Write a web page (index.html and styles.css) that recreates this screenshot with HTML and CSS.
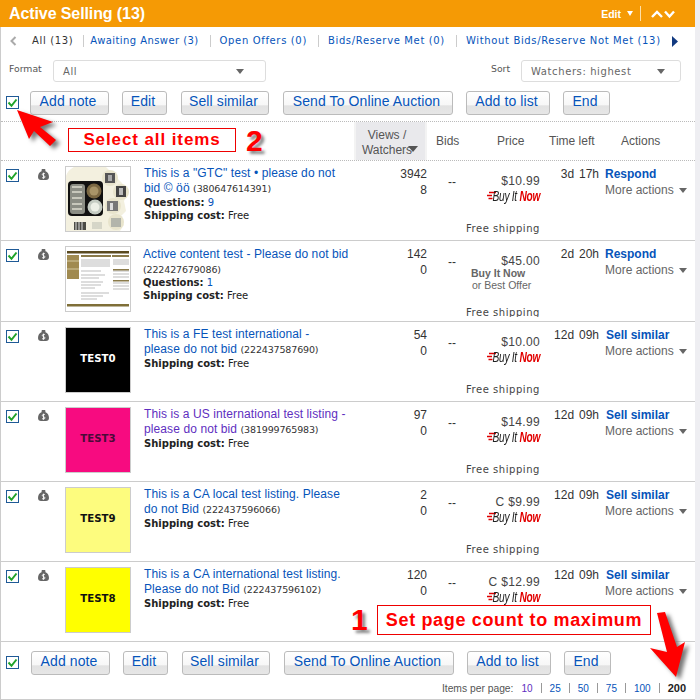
FILE: index.html
```html
<!DOCTYPE html>
<html lang="en">
<head>
<meta charset="utf-8">
<title>Active Selling</title>
<link rel="stylesheet" href="styles.css">
</head>
<body>
<svg class="defs" width="0" height="0" aria-hidden="true">
  <symbol id="bag" viewBox="0 0 11 11">
    <path d="M3.800 0h3.400l.3 2.200C9.600 2.800 11 5 11 8c0 2-1.200 3-3 3H3c-1.800 0-3-1-3-3 0-3 1.400-5.200 3.500-5.800z" fill="#666"/>
    <path d="M7 4.800C6.300 4.200 4.300 4.200 4.300 5.500S7 6.600 7 7.900 4.800 9.200 4 8.500M5.500 3.700v6" fill="none" stroke="#fff" stroke-width=".9"/>
  </symbol>
  <symbol id="stripes" viewBox="0 0 9 9">
    <path d="M2 1.500h7M0 4.500h5M1.500 7.500h4" stroke="#d00" stroke-width="1.300"/>
  </symbol>
  <symbol id="tick" viewBox="0 0 13 13">
    <path d="M2.500 6.500l3 3.300 5-6.300" fill="none" stroke="#1fa32a" stroke-width="2"/>
  </symbol>
</svg>

<main class="panel">
  <header class="title-bar">
    <h1 class="title">Active Selling (13)</h1>
    <div class="title-tools">
      <span class="edit-link">Edit</span>
      <span class="tri tri-white"></span>
      <span class="title-sep"></span>
      <svg class="chev" width="24" height="10" viewBox="0 0 24 10"><path d="M1 8l5-5 5 5M14 2.500l4.500 5 4.500-5" fill="none" stroke="#fff" stroke-width="2.400"/></svg>
    </div>
  </header>

  <nav class="tabs">
    <svg class="tab-prev" width="7" height="10" viewBox="0 0 7 10"><path d="M5.500 1L1.500 5l4 4" fill="none" stroke="#aaa" stroke-width="2"/></svg>
    <span class="tab tab-current">All (13)</span>
    <a class="tab tab-first">Awaiting Answer (3)</a>
    <a class="tab">Open Offers (0)</a>
    <a class="tab">Bids/Reserve Met (0)</a>
    <a class="tab">Without Bids/Reserve Not Met (13)</a>
    <svg class="tab-next" width="6" height="11" viewBox="0 0 6 11"><path d="M0 0l6 5.500L0 11z" fill="#123a80"/></svg>
  </nav>

  <section class="filters">
    <span class="filter-label">Format</span>
    <div class="select select-format"><span>All</span><span class="tri tri-gray"></span></div>
    <span class="filter-label sort-label">Sort</span>
    <div class="select select-sort"><span>Watchers: highest</span><span class="tri tri-gray"></span></div>
  </section>

  <section class="toolbar">
    <span class="check"><svg width="13" height="13"><use href="#tick"/></svg></span>
    <button class="btn btn-note">Add note</button>
    <button class="btn btn-edit">Edit</button>
    <button class="btn btn-sell">Sell similar</button>
    <button class="btn btn-send">Send To Online Auction</button>
    <button class="btn btn-list">Add to list</button>
    <button class="btn btn-end">End</button>
  </section>

  <section class="col-heads">
    <div class="head-views">Views /<br>Watchers<span class="tri tri-sort"></span></div>
    <div class="head head-bids">Bids</div>
    <div class="head head-price">Price</div>
    <div class="head head-time">Time left</div>
    <div class="head head-actions">Actions</div>
  </section>

  <article class="row">
    <span class="check check-row"><svg width="13" height="13"><use href="#tick"/></svg></span>
    <svg class="bag" width="11" height="11"><use href="#bag"/></svg>
    <div class="thumb">
      <svg width="64" height="64" viewBox="0 0 64 64">
        <rect width="64" height="64" fill="#f3f0df"/>
        <path d="M0 0h8C4 2 1 5 0 9zM40 0h24v64H54l4-6-4-8 6-6-2-10 4-8-6-10-8-8z" fill="#fff"/>
        <rect x="2" y="14" width="35" height="35" rx="4" fill="#111"/>
        <rect x="4" y="17" width="15" height="30" rx="3" fill="#8b8d84"/>
        <path d="M6 20h10M6 25h10M6 31h10M6 37h10M6 42h10" stroke="#c8c8bc" stroke-width="2"/>
        <circle cx="28" cy="24" r="7.500" fill="#7b6843"/><circle cx="28" cy="24" r="4.500" fill="#a89468"/>
        <circle cx="29" cy="40" r="7.500" fill="#c4cbc2"/><circle cx="29" cy="40" r="4.500" fill="#ecefe6"/>
        <circle cx="44" cy="11" r="8" fill="#e8e4cc"/><rect x="39" y="6" width="10" height="10" fill="#555"/><rect x="42" y="8" width="4" height="6" fill="#aaa"/>
        <circle cx="55" cy="25" r="8" fill="#e8e4cc"/><rect x="50" y="19" width="10" height="11" fill="#444"/><rect x="53" y="21" width="4" height="7" fill="#bbb"/>
        <circle cx="47" cy="39" r="8" fill="#e8e4cc"/><rect x="41" y="34" width="11" height="10" fill="#777"/><rect x="44" y="36" width="3" height="7" fill="#ddd"/>
        <circle cx="50" cy="55" r="8" fill="#e8e4cc"/><rect x="45" y="51" width="10" height="9" fill="#b3b5ab"/>
        <rect x="8" y="55" width="12" height="8" fill="#4a4a44"/><path d="M10 55v8M13 55v8M16 55v8" stroke="#ddd"/>
        <rect x="26" y="55" width="10" height="7" fill="#d6d6c8"/>
      </svg>
    </div>
    <div class="info">
      <p class="name"><a>This is a "GTC" test • please do not bid © öö</a> <span class="item-no">(380647614391)</span></p>
      <p class="meta"><b>Questions:</b> <a>9</a></p>
      <p class="meta"><b>Shipping cost:</b> Free</p>
    </div>
    <div class="counts">3942<br>8</div>
    <div class="bids">--</div>
    <div class="price"><span>$10.99</span>
      <span class="bin"><svg width="9" height="9"><use href="#stripes"/></svg><span class="bin-word">Buy It <em>Now</em></span></span>
      <span class="ship">Free shipping</span></div>
    <div class="time">3d 17h</div>
    <div class="acts"><a class="act act-tight">Respond</a><span class="more">More actions<span class="tri tri-more"></span></span></div>
  </article>

  <article class="row row-tall">
    <span class="check check-row"><svg width="13" height="13"><use href="#tick"/></svg></span>
    <svg class="bag" width="11" height="11"><use href="#bag"/></svg>
    <div class="thumb">
      <svg width="64" height="64" viewBox="0 0 64 64">
        <rect width="64" height="64" fill="#fff"/>
        <rect x="1" y="4" width="62" height="2.500" fill="#5a4a20"/>
        <rect x="1" y="8" width="12" height="24" fill="#a08a50"/>
        <path d="M1 14h12M1 22h12" stroke="#d3c8a0"/>
        <rect x="15" y="8" width="30" height="2" fill="#8a7a4a"/>
        <rect x="46" y="8" width="17" height="2" fill="#8a7a4a"/>
        <path d="M15 13h29M15 15h29M15 17h29M15 19h29M15 24h20M15 28h24M15 31h18M15 35h22M15 38h20M15 41h14M15 46h28M15 49h22M15 52h16M47 13h16M47 15h16M47 17h16M47 24h16M47 27h16M47 30h16M47 36h16M47 39h16M47 42h16" stroke="#bbb" stroke-width="1"/>
        <rect x="47" y="22" width="16" height="1.500" fill="#8a7a4a"/>
        <rect x="47" y="33" width="16" height="1.500" fill="#8a7a4a"/>
        <rect x="1" y="57" width="62" height="2.500" fill="#7f6f38"/>
      </svg>
    </div>
    <div class="info info-shift">
      <p class="name"><a>Active content test - Please do not bid</a> <span class="item-no">(222427679086)</span></p>
      <p class="meta"><b>Questions:</b> <a>1</a></p>
      <p class="meta"><b>Shipping cost:</b> Free</p>
    </div>
    <div class="counts">142<br>0</div>
    <div class="bids">--</div>
    <div class="price"><span>$45.00</span>
      <span class="offer"><b>Buy It Now</b><span class="offer-or">or Best Offer</span></span>
      <span class="ship ship-clip">Free shipping</span></div>
    <div class="time">2d 20h</div>
    <div class="acts"><a class="act act-tight">Respond</a><span class="more">More actions<span class="tri tri-more"></span></span></div>
  </article>

  <article class="row">
    <span class="check check-row"><svg width="13" height="13"><use href="#tick"/></svg></span>
    <svg class="bag" width="11" height="11"><use href="#bag"/></svg>
    <div class="thumb thumb-black">TEST0</div>
    <div class="info">
      <p class="name"><a>This is a FE test international - please do not bid</a> <span class="item-no">(222437587690)</span></p>
      <p class="meta"><b>Shipping cost:</b> Free</p>
    </div>
    <div class="counts">54<br>0</div>
    <div class="bids">--</div>
    <div class="price"><span>$10.00</span>
      <span class="bin"><svg width="9" height="9"><use href="#stripes"/></svg><span class="bin-word">Buy It <em>Now</em></span></span>
      <span class="ship">Free shipping</span></div>
    <div class="time">12d 09h</div>
    <div class="acts"><a class="act">Sell similar</a><span class="more">More actions<span class="tri tri-more"></span></span></div>
  </article>

  <article class="row">
    <span class="check check-row"><svg width="13" height="13"><use href="#tick"/></svg></span>
    <svg class="bag" width="11" height="11"><use href="#bag"/></svg>
    <div class="thumb thumb-pink">TEST3</div>
    <div class="info">
      <p class="name"><a class="visited">This is a US international test listing - please do not bid</a> <span class="item-no">(381999765983)</span></p>
      <p class="meta"><b>Shipping cost:</b> Free</p>
    </div>
    <div class="counts">97<br>0</div>
    <div class="bids">--</div>
    <div class="price"><span>$14.99</span>
      <span class="bin"><svg width="9" height="9"><use href="#stripes"/></svg><span class="bin-word">Buy It <em>Now</em></span></span>
      <span class="ship">Free shipping</span></div>
    <div class="time">12d 09h</div>
    <div class="acts"><a class="act">Sell similar</a><span class="more">More actions<span class="tri tri-more"></span></span></div>
  </article>

  <article class="row">
    <span class="check check-row"><svg width="13" height="13"><use href="#tick"/></svg></span>
    <svg class="bag" width="11" height="11"><use href="#bag"/></svg>
    <div class="thumb thumb-pale">TEST9</div>
    <div class="info">
      <p class="name"><a>This is a CA local test listing. Please do not Bid</a> <span class="item-no">(222437596066)</span></p>
      <p class="meta"><b>Shipping cost:</b> Free</p>
    </div>
    <div class="counts">2<br>0</div>
    <div class="bids">--</div>
    <div class="price"><span>C $9.99</span>
      <span class="bin"><svg width="9" height="9"><use href="#stripes"/></svg><span class="bin-word">Buy It <em>Now</em></span></span>
      <span class="ship">Free shipping</span></div>
    <div class="time">12d 09h</div>
    <div class="acts"><a class="act">Sell similar</a><span class="more">More actions<span class="tri tri-more"></span></span></div>
  </article>

  <article class="row">
    <span class="check check-row"><svg width="13" height="13"><use href="#tick"/></svg></span>
    <svg class="bag" width="11" height="11"><use href="#bag"/></svg>
    <div class="thumb thumb-yellow">TEST8</div>
    <div class="info">
      <p class="name"><a>This is a CA international test listing. Please do not Bid</a> <span class="item-no">(222437596102)</span></p>
      <p class="meta"><b>Shipping cost:</b> Free</p>
    </div>
    <div class="counts">120<br>0</div>
    <div class="bids">--</div>
    <div class="price"><span>C $12.99</span>
      <span class="bin"><svg width="9" height="9"><use href="#stripes"/></svg><span class="bin-word">Buy It <em>Now</em></span></span></div>
    <div class="time">12d 09h</div>
    <div class="acts"><a class="act">Sell similar</a><span class="more">More actions<span class="tri tri-more"></span></span></div>
  </article>

  <section class="toolbar toolbar-bottom">
    <span class="check"><svg width="13" height="13"><use href="#tick"/></svg></span>
    <button class="btn btn-note">Add note</button>
    <button class="btn btn-edit">Edit</button>
    <button class="btn btn-sell">Sell similar</button>
    <button class="btn btn-send">Send To Online Auction</button>
    <button class="btn btn-list">Add to list</button>
    <button class="btn btn-end">End</button>
  </section>

  <footer class="pager">
    <span class="pager-label">Items per page:</span>
    <a class="visited">10</a><i></i><a>25</a><i></i><a>50</a><i></i><a>75</a><i></i><a>100</a><i></i><b>200</b>
  </footer>
</main>

<div class="note note-select">Select all items</div>
<div class="num num-two">2</div>
<div class="note note-page">Set page count to maximum</div>
<div class="num num-one">1</div>
<svg class="arrows" width="700" height="700" viewBox="0 0 700 700">
  <polygon class="arrow" points="17,110 53,122 40,127 56,140 50,146 34,131 29,139"/>
  <polygon class="arrow" points="657,613 665,612 677,647 685,642 676,677 650,648 667,652"/>
</svg>
</body>
</html>
```
FILE: styles.css
```css
* { box-sizing: border-box; }
html, body { margin: 0; padding: 0; }
body {
  width: 700px;
  height: 700px;
  overflow: hidden;
  position: relative;
  background: #eeeef2;
  font-family: "Liberation Sans", Arial, sans-serif;
  color: #333;
}
.defs { position: absolute; }
a { color: #0654ba; text-decoration: none; }
a.visited { color: #5e2ec0; }
p { margin: 0; }

.panel {
  width: 695px;
  height: 700px;
  background: #fff;
  border-left: 1px solid #ccc;
  border-bottom: 1px solid #ccc;
}

.title-bar {
  height: 27px;
  margin-left: -1px;
  background: #f59a05;
  display: flex;
  align-items: center;
  justify-content: space-between;
  padding: 0 20px 0 9px;
}
.title { margin: 0; font-size: 16px; font-weight: 700; color: #fff; letter-spacing: -.1px; }
.title-tools { display: flex; align-items: center; color: #fff; }
.edit-link { font-size: 10.500px; font-weight: 700; }
.title-sep { width: 1px; height: 15px; background: #fde0a8; margin: 0 10px 0 7px; }

.tri { display: inline-block; width: 0; height: 0; border-style: solid; border-color: transparent; border-width: 5px 4px 0; }
.tri-white { border-top-color: #fff; border-width: 5px 3.500px 0; margin-left: 6px; }
.tri-gray { border-top-color: #666; }
.tri-more { border-top-color: #666; margin-left: 5px; vertical-align: 1px; }
.tri-sort { border-top-color: #555; border-width: 6px 5px 0; position: absolute; right: 7px; top: 24px; }

.tabs {
  height: 28px;
  display: flex;
  align-items: center;
  padding-left: 9px;
  font-family: "DejaVu Sans", Verdana, sans-serif;
  font-size: 10px;
  letter-spacing: .65px;
}
.tab-prev { margin-right: 15px; }
.tab { white-space: nowrap; padding-left: 9px; margin-left: 11px; border-left: 1px solid #ccc; line-height: 12px; }
.tab-first { padding-left: 6px; margin-left: 10px; letter-spacing: .42px; }
.tab-current { color: #333; border-left: 0; padding: 0; margin: 0; }
.tab-next { margin-left: 11px; }

.filters {
  height: 36px;
  display: flex;
  align-items: flex-start;
  padding: 5px 0 0 8px;
  font-family: "DejaVu Sans", Verdana, sans-serif;
}
.filter-label { font-size: 9.300px; color: #555; line-height: 18px; width: 44px; }
.sort-label { width: 30px; margin-left: 225px; }
.select {
  height: 22px;
  border: 1px solid #ddd;
  border-radius: 3px;
  display: flex;
  align-items: center;
  justify-content: space-between;
  font-size: 10px;
  letter-spacing: .6px;
  color: #666;
  padding: 0 21px 0 9px;
}
.select-format { width: 213px; }
.select-sort { width: 160px; padding-right: 15px; }

.toolbar {
  height: 31px;
  display: flex;
  align-items: flex-start;
  gap: 13px;
  padding: 0 0 0 5px;
  border-bottom: 1px dotted #bbb;
}
.check {
  flex: none;
  width: 13px;
  height: 13px;
  border: 1px solid #1f5a96;
  background: #fff;
  display: block;
  position: relative;
}
.check svg { position: absolute; left: -1px; top: -1px; }
.toolbar > .check { margin-top: 5px; margin-right: -2px; }
.btn {
  height: 24px;
  padding: 0 3px 4px 0;
  border: 1px solid #bbb;
  border-radius: 3px;
  background: linear-gradient(#fff 0, #f7f7f7 60%, #e2e2e2 62%, #e6e6e6 100%);
  color: #0654ba;
  font: 14px "Liberation Sans", Arial, sans-serif;
  letter-spacing: .1px;
  white-space: nowrap;
}
.btn-note { width: 79px; }
.btn-edit { width: 45px; }
.btn-sell { width: 88px; margin-left: 1px; }
.btn-send { width: 170px; margin-left: 1px; }
.btn-list { width: 84px; }
.btn-end { width: 47px; }

.col-heads {
  height: 39px;
  display: flex;
  padding-left: 353px;
  border-bottom: 1px dotted #bbb;
  font-size: 12px;
  color: #555;
}
.head-views {
  width: 73px;
  position: relative;
  background: #e9e9ec;
  border-left: 2px solid #f3f3f3;
  border-right: 2px solid #f3f3f3;
  text-align: center;
  line-height: 15px;
  padding: 6px 7px 0 0;
}
.head { line-height: 38px; }
.head-bids { margin-left: 9px; width: 61px; }
.head-price { width: 52px; }
.head-time { width: 72px; }

.row {
  height: 80px;
  display: grid;
  grid-template-columns: 37px 27px 66px 218px 78px 38px 75px 59px 96px;
  border-bottom: 1px solid #ccc;
  overflow: hidden;
}
.row-tall { height: 81px; }
.check-row { margin: 8px 0 0 5px; }
.bag { margin-top: 8px; }
.thumb {
  width: 66px;
  height: 66px;
  margin-top: 5px;
  border: 1px solid #ccc;
  display: flex;
  align-items: center;
  justify-content: center;
  padding-bottom: 4px;
  font: 700 10.200px "DejaVu Sans", Verdana, sans-serif;
  color: #111;
}
.thumb svg { filter: blur(.4px); }
.thumb:has(svg) { padding: 0; }
.thumb-black { background: #000; color: #fff; }
.thumb-pink { background: #f70b80; color: #4a0a38; }
.thumb-pale { background: #fdfc7e; }
.thumb-yellow { background: #ff0; }

.info { padding: 5px 3px 0 13px; }
.info-shift { padding: 6px 0 0 12px; }
.info-shift .name { margin-bottom: -1px; }
.name { font-size: 12px; line-height: 15px; letter-spacing: .1px; }
.item-no { font-family: "DejaVu Sans", Verdana, sans-serif; font-size: 9.500px; color: #333; letter-spacing: -.15px; }
.meta { font-family: "DejaVu Sans", Verdana, sans-serif; font-size: 10px; line-height: 13px; color: #222; }
.counts { text-align: right; font-size: 12px; line-height: 16px; padding-top: 5px; color: #333; }
.bids { padding: 14px 0 0 21px; font-size: 12px; line-height: 14px; }
.price { display: flex; flex-direction: column; align-items: flex-end; font-size: 12px; letter-spacing: .35px; padding-top: 13px; line-height: 14px; color: #444; position: relative; }
.bin { display: flex; align-items: center; justify-content: space-between; width: 53px; height: 14px; }
.bin svg { flex: none; }
.bin-word {
  display: inline-block;
  flex: none;
  margin-left: -30px;
  font: italic 15px "Liberation Sans", Arial, sans-serif;
  letter-spacing: -.4px;
  color: #222;
  white-space: nowrap;
  transform: scaleX(.68);
  transform-origin: right center;
}
.bin-word em { color: #e20000; font-weight: 700; }
.ship { position: absolute; right: 0; top: 61px; font: 10px/13px "DejaVu Sans", Verdana, sans-serif; letter-spacing: .55px; white-space: nowrap; color: #444; }
.ship-clip { top: 65px; height: 11px; overflow: hidden; }
.offer { align-self: flex-start; margin: -1px 0 0 6px; display: flex; flex-direction: column; font-size: 10.500px; letter-spacing: 0; line-height: 12px; color: #666; white-space: nowrap; }
.offer-or { margin-left: 1px; }
.time { text-align: right; font-size: 12px; line-height: 16px; padding-top: 5px; color: #333; white-space: nowrap; word-spacing: 1.500px; }
.acts { padding: 5px 0 0 6px; display: flex; flex-direction: column; font-size: 12px; line-height: 16px; white-space: nowrap; }
.act { font-weight: 700; margin-left: 1px; }
.act-tight { margin-left: 0; }
.more { color: #666; }

.toolbar-bottom { height: 38px; border-bottom: 0; padding-top: 9px; }
.toolbar-bottom > .check { margin-right: -1px; }
.pager {
  height: 18px;
  display: flex;
  align-items: center;
  justify-content: flex-end;
  padding: 0 9px 2px 0;
  font-size: 10px;
  color: #555;
  gap: 8px;
}
.pager-label { font-size: 10.300px; }
.pager i { width: 1px; height: 10px; background: #999; }
.pager b { color: #222; font-size: 11px; }

.note {
  position: absolute;
  border: 1px solid #e00;
  background: #fff;
  color: #f00;
  font-weight: 700;
  text-align: center;
  white-space: nowrap;
}
.note-select { left: 68px; top: 128px; width: 168px; height: 24px; font-size: 17px; line-height: 22px; letter-spacing: .9px; }
.note-page { left: 377px; top: 605px; width: 274px; height: 30px; font-size: 18px; line-height: 28px; letter-spacing: .65px; }
.num {
  position: absolute;
  color: #f00;
  font-weight: 700;
  font-size: 30px;
  line-height: 30px;
  text-shadow: 3px 3px 3px #888;
}
.num-two { left: 246px; top: 126px; }
.num-one { left: 351px; top: 605px; }
.arrows { position: absolute; left: 0; top: 0; pointer-events: none; }
.arrow { fill: #f00; filter: drop-shadow(4px 3px 2px #777); }
```
